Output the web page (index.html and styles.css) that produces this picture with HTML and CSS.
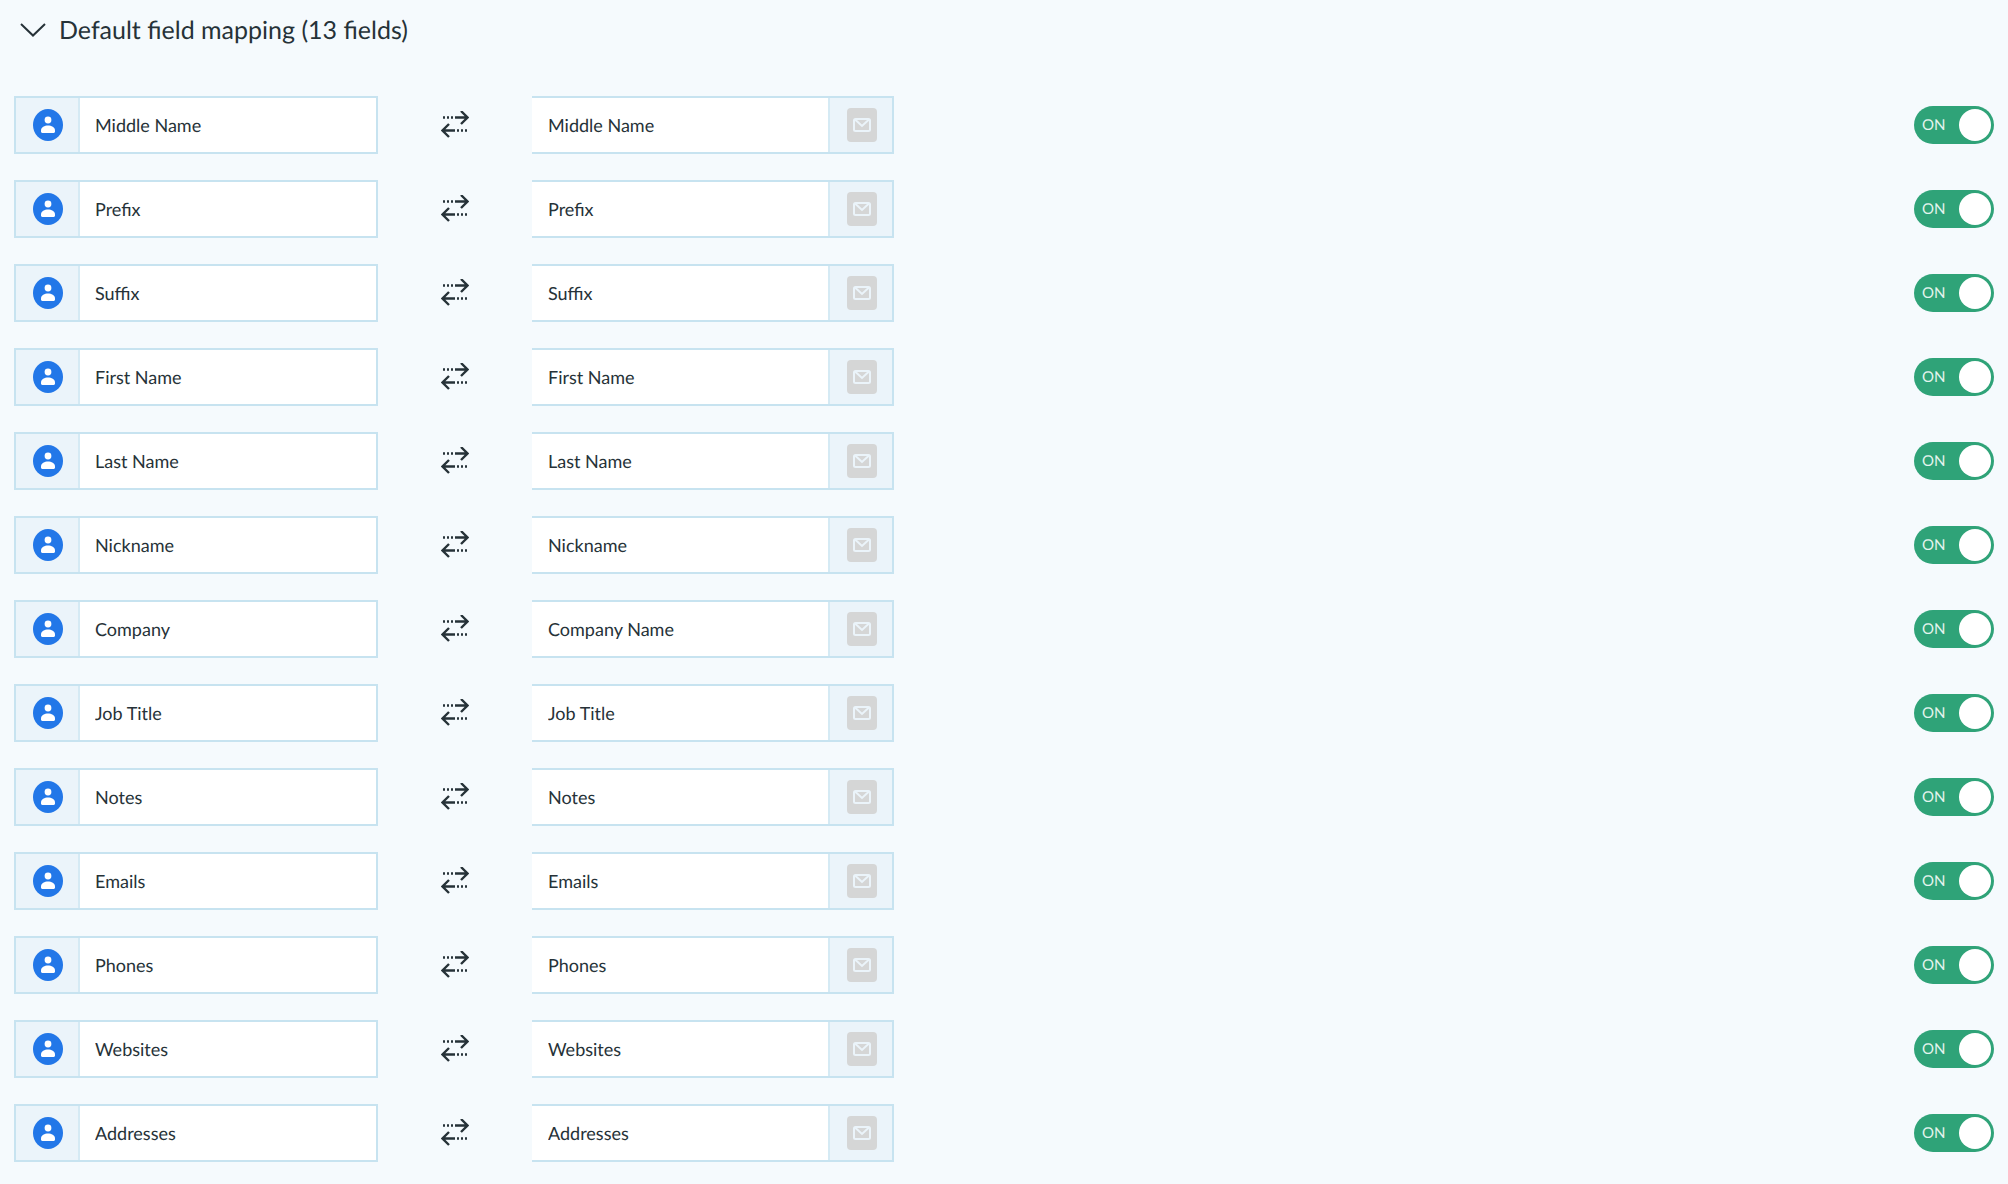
FILE: index.html
```html
<!DOCTYPE html>
<html lang="en">
<head>
    <meta charset="UTF-8">
    <meta name="viewport" content="width=device-width, initial-scale=1.0">
    <title>Default field mapping</title>
    <link rel="stylesheet" href="styles.css">
</head>
<body>

    <!-- Shared icons -->
    <svg class="icon-defs" aria-hidden="true">
        <symbol id="icon-person" viewBox="0 0 30 32">
            <ellipse cx="15" cy="16" rx="15" ry="16" fill="#2277e8"/>
            <circle cx="15" cy="11" r="3.4" fill="#fff"/>
            <path d="M8 22.6v-1.2c0-3 3.6-4.9 7-4.9s7 1.9 7 4.9v1.2c0 .8-.5 1.3-1.3 1.3H9.3c-.8 0-1.3-.5-1.3-1.3z" fill="#fff"/>
        </symbol>
        <symbol id="icon-mail" viewBox="0 0 30 34">
            <rect width="30" height="34" rx="4" fill="#d5d6d6"/>
            <rect x="7" y="11" width="16" height="12" rx="1.5" fill="none" stroke="#ebf4fa" stroke-width="2"/>
            <path d="M8 11.5l7 6.5 7-6.5" fill="none" stroke="#ebf4fa" stroke-width="2"/>
        </symbol>
        <symbol id="icon-sync" viewBox="0 0 28 28">
            <g fill="none" stroke="#263238" stroke-width="2.4">
                <path d="M2 6.5h12" stroke-dasharray="2 2"/>
                <path d="M14 6.5h12M20 0l6.5 6.5L20 13"/>
                <path d="M26 19.5H14" stroke-dasharray="2 2"/>
                <path d="M14 19.5H2M8 13l-6.5 6.5L8 26"/>
            </g>
        </symbol>
    </svg>

    <main>
        <h2 class="section-title">
            <button type="button" class="section-toggle" aria-expanded="true" aria-controls="fieldList">
                <svg class="chevron" viewBox="0 0 26 14" aria-hidden="true">
                    <path d="M1 1l12 11.5L25 1" fill="none" stroke="#263238" stroke-width="2"/>
                </svg>
                <span>Default field mapping (13 fields)</span>
            </button>
        </h2>

        <div class="field-list" id="fieldList">
            <!-- Rows will be inserted here dynamically -->
        </div>
    </main>

    <script>
        // Source field, target field
        const fields = [
            ["Middle Name", "Middle Name"],
            ["Prefix", "Prefix"],
            ["Suffix", "Suffix"],
            ["First Name", "First Name"],
            ["Last Name", "Last Name"],
            ["Nickname", "Nickname"],
            ["Company", "Company Name"],
            ["Job Title", "Job Title"],
            ["Notes", "Notes"],
            ["Emails", "Emails"],
            ["Phones", "Phones"],
            ["Websites", "Websites"],
            ["Addresses", "Addresses"]
        ];

        const fieldList = document.getElementById("fieldList");

        fields.forEach(([source, target]) => {
            const row = document.createElement("div");
            row.classList.add("field-row");
            row.innerHTML = `
                <label class="field-box">
                    <span class="field-icon"><svg class="person" role="img" aria-label="Contacts field"><use href="#icon-person"/></svg></span>
                    <input class="field-name" type="text" value="${source}" readonly>
                </label>
                <svg class="sync" aria-hidden="true"><use href="#icon-sync"/></svg>
                <label class="field-box field-box-target">
                    <input class="field-name" type="text" value="${target}" readonly>
                    <span class="field-icon"><svg class="mail" role="img" aria-label="Mail field"><use href="#icon-mail"/></svg></span>
                </label>
                <label class="switch">
                    <input class="switch-input" type="checkbox" aria-label="Sync ${source}" checked>
                    <span class="switch-text">ON</span>
                    <span class="switch-knob"></span>
                </label>
            `;
            fieldList.appendChild(row);
        });

        // Update the switch text when it is flipped
        fieldList.addEventListener("change", function (e) {
            if (e.target.classList.contains("switch-input")) {
                e.target.nextElementSibling.innerText = e.target.checked ? "ON" : "OFF";
            }
        });

        // Collapse / expand the list
        document.querySelector(".section-toggle").addEventListener("click", function () {
            fieldList.hidden = !fieldList.hidden;
            this.setAttribute("aria-expanded", String(!fieldList.hidden));
        });
    </script>

</body>
</html>
```
FILE: styles.css
```css
* {
    box-sizing: border-box;
}

body {
    margin: 0;
    padding: 14px 14px 22px;
    font-family: Lato, "Open Sans", sans-serif;
    font-size: 18px;
    text-rendering: geometricPrecision;
    color: #263238;
    background-color: #f5fafd;
}

.icon-defs {
    display: none;
}

/* Section header */
.section-title {
    margin: 0 0 50px;
    font-size: 25px;
    font-weight: normal;
    line-height: 32px;
}

.section-toggle {
    display: flex;
    align-items: center;
    gap: 13px;
    padding: 0 6px;
    border: none;
    background: none;
    font: inherit;
    text-rendering: inherit;
    color: inherit;
    cursor: pointer;
}

.chevron {
    width: 26px;
    height: 14px;
}

.section-toggle[aria-expanded="false"] .chevron {
    transform: rotate(-90deg);
}

/* Mapping rows */
.field-list {
    display: flex;
    flex-direction: column;
    gap: 26px;
}

.field-list[hidden] {
    display: none;
}

.field-row {
    display: flex;
    align-items: center;
}

.field-box {
    display: flex;
    flex: 0 1 364px;
    min-width: 0;
    height: 58px;
    border: 2px solid #c7e3f0;
    background-color: #fff;
}

.field-box-target {
    flex-basis: 362px;
    border-left: none;
}

.field-icon {
    display: flex;
    flex: 0 0 64px;
    align-items: center;
    justify-content: center;
    padding-left: 2px;
    background-color: #ebf4fa;
    border-right: 2px solid #d5eaf4;
}

.field-box-target .field-icon {
    border-right: none;
    border-left: 2px solid #d5eaf4;
}

.field-name {
    flex: 1;
    width: 100%;
    min-width: 0;
    padding: 0 15px;
    border: none;
    outline: none;
    background: none;
    font: inherit;
    text-rendering: inherit;
    color: inherit;
}

.field-box-target .field-name {
    padding: 0 16px;
}

.person {
    width: 30px;
    height: 32px;
}

.mail {
    width: 30px;
    height: 34px;
}

.sync {
    flex: none;
    width: 28px;
    height: 28px;
    margin: 0 63px;
    overflow: visible;
}

/* ON / OFF switch */
.switch {
    display: flex;
    flex: none;
    align-items: center;
    justify-content: space-between;
    width: 80px;
    height: 38px;
    margin-left: auto;
    padding: 0 3px 0 8px;
    border-radius: 19px;
    background-color: #90a4ae;
    cursor: pointer;
}

.switch:has(:checked) {
    background-color: #2fa378;
}

.switch-input {
    position: absolute;
    opacity: 0;
}

.switch-text {
    font-size: 15px;
    color: #e4f4ee;
}

.switch-knob {
    width: 32px;
    height: 32px;
    border-radius: 50%;
    background-color: #fff;
}
```
